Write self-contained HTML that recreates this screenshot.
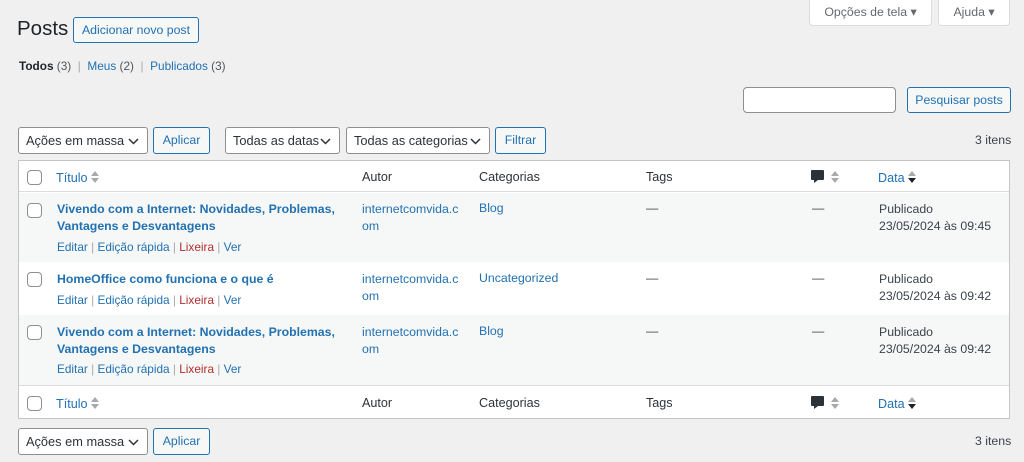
<!DOCTYPE html>
<html><head><meta charset="utf-8"><style>
*{box-sizing:border-box;margin:0;padding:0}
body{width:1024px;height:462px;background:#f0f0f1;font-family:"Liberation Sans",sans-serif;font-size:12.3px;color:#3c434a;position:relative;overflow:hidden}
.a{position:absolute;white-space:nowrap}
.l{color:#2271b1}
.btn{position:absolute;border:1px solid #2271b1;border-radius:3px;color:#2271b1;background:#f6f7f7;text-align:center;font-size:12.3px}
.sel{position:absolute;border:1px solid #8c8f94;border-radius:3px;background:#fff;color:#2c3338;font-size:12.8px;padding-left:7px}
.sel svg{position:absolute;right:8px;top:10px}
.tb{position:absolute;left:18px;width:992px;border:1px solid #c3c4c7;background:#fff}
.row{position:absolute;left:19px;width:990px}
.cb{position:absolute;left:27px;width:15px;height:15px;border:1px solid #8c8f94;border-radius:4px;background:#fff}
.t{font-weight:bold;color:#2271b1;font-size:12.3px;line-height:17px}
.act{font-size:11.8px;color:#2271b1}
.act .r{color:#b32d2e}
.act .s{color:#a7aaad}
.h{font-size:12.6px;color:#2c3338}
</style></head><body>
<div class="a" style="left:17px;top:17px;font-size:20.5px;color:#1d2327">Posts</div>
<div class="btn" style="left:73px;top:17px;width:126px;height:26px;line-height:24px">Adicionar novo post</div>
<div class="a" style="left:19px;top:59px;font-size:11.8px"><b style="color:#1d2327">Todos</b> <span style="color:#50575e">(3)</span> <span style="color:#a7aaad">&nbsp;|&nbsp;</span> <span class="l">Meus</span> <span style="color:#50575e">(2)</span> <span style="color:#a7aaad">&nbsp;|&nbsp;</span> <span class="l">Publicados</span> <span style="color:#50575e">(3)</span></div>

<div class="a" style="left:809px;top:-2px;width:123px;height:28px;background:#fff;border:1px solid #dcdcde;border-top:0;border-radius:0 0 4px 4px;color:#646970;text-align:center;line-height:28px;font-size:12.3px">Opções de tela ▾</div>
<div class="a" style="left:938px;top:-2px;width:72px;height:28px;background:#fff;border:1px solid #dcdcde;border-top:0;border-radius:0 0 4px 4px;color:#646970;text-align:center;line-height:28px;font-size:12.3px">Ajuda ▾</div>

<div class="a" style="left:743px;top:87px;width:153px;height:26px;background:#fff;border:1px solid #8c8f94;border-radius:4px"></div>
<div class="btn" style="left:907px;top:87px;width:104px;height:26px;line-height:24px">Pesquisar posts</div>

<div class="sel" style="left:18px;top:127px;width:130px;height:27px;line-height:25px">Ações em massa<svg width="11" height="7" viewBox="0 0 11 7"><path d="M1 1l4.5 4.5L10 1" fill="none" stroke="#2c3338" stroke-width="1.5"/></svg></div>
<div class="btn" style="left:153px;top:127px;width:57px;height:27px;line-height:25px">Aplicar</div>
<div class="sel" style="left:225px;top:127px;width:115px;height:27px;line-height:25px">Todas as datas<svg width="11" height="7" viewBox="0 0 11 7"><path d="M1 1l4.5 4.5L10 1" fill="none" stroke="#2c3338" stroke-width="1.5"/></svg></div>
<div class="sel" style="left:346px;top:127px;width:144px;height:27px;line-height:25px">Todas as categorias<svg width="11" height="7" viewBox="0 0 11 7"><path d="M1 1l4.5 4.5L10 1" fill="none" stroke="#2c3338" stroke-width="1.5"/></svg></div>
<div class="btn" style="left:495px;top:127px;width:51px;height:27px;line-height:25px">Filtrar</div>
<div class="a" style="left:975px;top:133px">3 itens</div>

<div class="tb" style="top:160px;height:259px"></div>
<div class="row" style="top:161px;height:31px;border-bottom:1px solid #dcdcde"></div>
<div class="cb" style="top:170px"></div>
<div class="a l" style="left:56px;top:170px;font-size:12.6px">Título <svg width="8" height="14" viewBox="0 0 8 14" style="vertical-align:-2px"><path d="M0 6L4 1L8 6Z M0 8L4 13L8 8Z" fill="#a7aaad"/></svg></div>
<div class="a h" style="left:362px;top:170px">Autor</div>
<div class="a h" style="left:479px;top:170px">Categorias</div>
<div class="a h" style="left:646px;top:170px">Tags</div>
<svg class="a" style="left:811px;top:170px" width="13" height="14" viewBox="0 0 13 14"><path d="M1 0h11a1 1 0 0 1 1 1v8a1 1 0 0 1-1 1H7L3 13V10H1A1 1 0 0 1 0 9V1a1 1 0 0 1 1-1z" fill="#2c3338"/></svg>
<svg class="a" style="left:831px;top:170px" width="8" height="14" viewBox="0 0 8 14"><path d="M0 6L4 1L8 6Z M0 8L4 13L8 8Z" fill="#a7aaad"/></svg>
<div class="a l" style="left:878px;top:170px;font-size:12.6px">Data <svg width="8" height="14" viewBox="0 0 8 14" style="vertical-align:-2px"><path d="M0 6L4 1L8 6Z" fill="#a7aaad"/><path d="M0 8L4 13L8 8Z" fill="#1d2327"/></svg></div>

<div class="row" style="top:193px;height:69px;background:#f6f7f7"></div>
<div class="cb" style="top:203px"></div>
<div class="a t" style="left:57px;top:201px">Vivendo com a Internet: Novidades, Problemas,<br>Vantagens e Desvantagens</div>
<div class="a act" style="left:57px;top:240px">Editar <span class="s">|</span> Edição rápida <span class="s">|</span> <span class="r">Lixeira</span> <span class="s">|</span> Ver</div>
<div class="a l" style="left:362px;top:201px;line-height:17px">internetcomvida.c<br>om</div>
<div class="a l" style="left:479px;top:201px">Blog</div>
<div class="a" style="left:646px;top:201px">—</div>
<div class="a" style="left:812px;top:201px">—</div>
<div class="a" style="left:879px;top:201px;line-height:17px">Publicado<br>23/05/2024 às 09:45</div>

<div class="cb" style="top:272px"></div>
<div class="a t" style="left:57px;top:271px">HomeOffice como funciona e o que é</div>
<div class="a act" style="left:57px;top:293px">Editar <span class="s">|</span> Edição rápida <span class="s">|</span> <span class="r">Lixeira</span> <span class="s">|</span> Ver</div>
<div class="a l" style="left:362px;top:271px;line-height:17px">internetcomvida.c<br>om</div>
<div class="a l" style="left:479px;top:271px">Uncategorized</div>
<div class="a" style="left:646px;top:271px">—</div>
<div class="a" style="left:812px;top:271px">—</div>
<div class="a" style="left:879px;top:271px;line-height:17px">Publicado<br>23/05/2024 às 09:42</div>

<div class="row" style="top:315px;height:70px;background:#f6f7f7"></div>
<div class="cb" style="top:325px"></div>
<div class="a t" style="left:57px;top:324px">Vivendo com a Internet: Novidades, Problemas,<br>Vantagens e Desvantagens</div>
<div class="a act" style="left:57px;top:362px">Editar <span class="s">|</span> Edição rápida <span class="s">|</span> <span class="r">Lixeira</span> <span class="s">|</span> Ver</div>
<div class="a l" style="left:362px;top:324px;line-height:17px">internetcomvida.c<br>om</div>
<div class="a l" style="left:479px;top:324px">Blog</div>
<div class="a" style="left:646px;top:324px">—</div>
<div class="a" style="left:812px;top:324px">—</div>
<div class="a" style="left:879px;top:324px;line-height:17px">Publicado<br>23/05/2024 às 09:42</div>

<div class="row" style="top:385px;height:1px;background:#dcdcde"></div>
<div class="cb" style="top:396px"></div>
<div class="a l" style="left:56px;top:396px;font-size:12.6px">Título <svg width="8" height="14" viewBox="0 0 8 14" style="vertical-align:-2px"><path d="M0 6L4 1L8 6Z M0 8L4 13L8 8Z" fill="#a7aaad"/></svg></div>
<div class="a h" style="left:362px;top:396px">Autor</div>
<div class="a h" style="left:479px;top:396px">Categorias</div>
<div class="a h" style="left:646px;top:396px">Tags</div>
<svg class="a" style="left:811px;top:396px" width="13" height="14" viewBox="0 0 13 14"><path d="M1 0h11a1 1 0 0 1 1 1v8a1 1 0 0 1-1 1H7L3 13V10H1A1 1 0 0 1 0 9V1a1 1 0 0 1 1-1z" fill="#2c3338"/></svg>
<svg class="a" style="left:831px;top:396px" width="8" height="14" viewBox="0 0 8 14"><path d="M0 6L4 1L8 6Z M0 8L4 13L8 8Z" fill="#a7aaad"/></svg>
<div class="a l" style="left:878px;top:396px;font-size:12.6px">Data <svg width="8" height="14" viewBox="0 0 8 14" style="vertical-align:-2px"><path d="M0 6L4 1L8 6Z" fill="#a7aaad"/><path d="M0 8L4 13L8 8Z" fill="#1d2327"/></svg></div>

<div class="sel" style="left:18px;top:428px;width:130px;height:27px;line-height:25px">Ações em massa<svg width="11" height="7" viewBox="0 0 11 7"><path d="M1 1l4.5 4.5L10 1" fill="none" stroke="#2c3338" stroke-width="1.5"/></svg></div>
<div class="btn" style="left:153px;top:428px;width:57px;height:27px;line-height:25px">Aplicar</div>
<div class="a" style="left:975px;top:434px">3 itens</div>
</body></html>
